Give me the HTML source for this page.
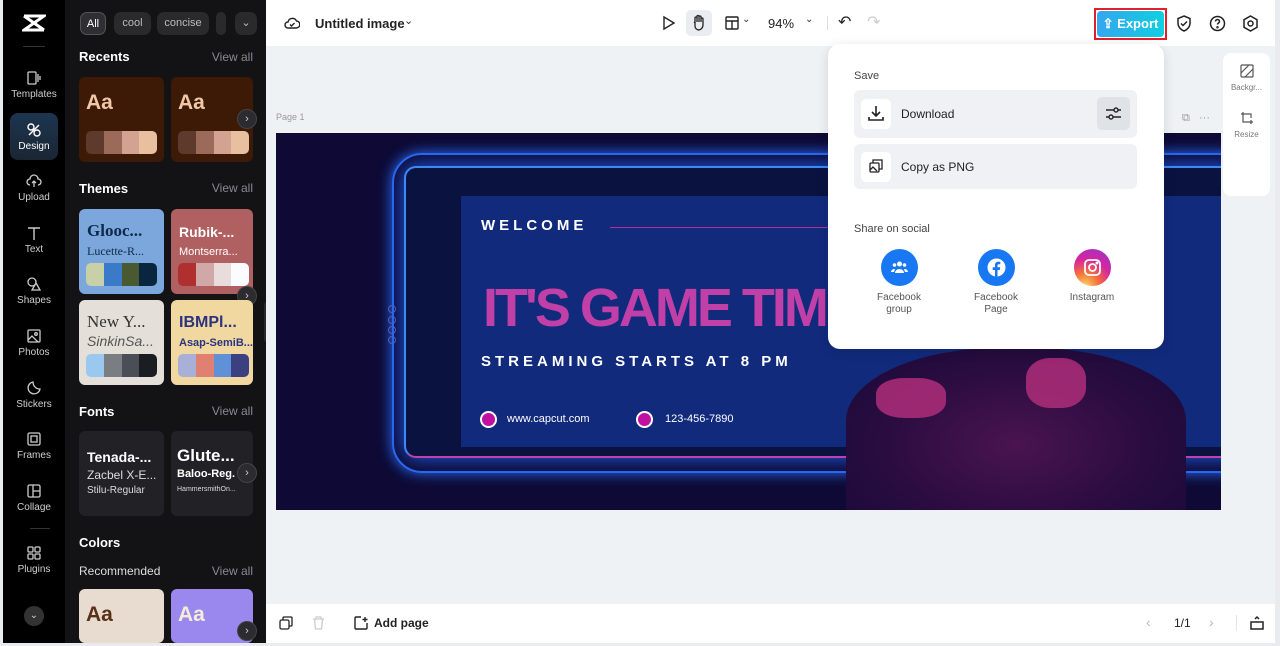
<!DOCTYPE html>
<html><head><meta charset="utf-8"><style>
*{box-sizing:border-box;margin:0;padding:0}
body{width:1280px;height:646px;overflow:hidden;background:#e9ebee;font-family:"Liberation Sans",sans-serif;position:relative}
.abs{position:absolute}
#rail{left:3px;top:0;width:62px;height:643px;background:#000}
#panel{left:65px;top:0;width:201px;height:643px;background:#131315}
.ri{position:absolute;left:0;width:62px;text-align:center;color:#cfcfd2;font-size:10px}
.ri svg{display:block;margin:0 auto 3px}
.chip{position:absolute;top:12px;height:23px;border-radius:7px;background:#2a2a2d;color:#bbb;font-size:11px;line-height:23px;text-align:center}
.h{position:absolute;left:14px;color:#fff;font-weight:bold;font-size:13px}
.va{position:absolute;right:13px;color:#8a8a8e;font-size:12px}
.card{position:absolute;width:85px;height:85px;border-radius:6px;overflow:hidden}
.sw{position:absolute;left:7px;bottom:8px;width:71px;height:23px;border-radius:5px;overflow:hidden;display:flex}
.sw i{flex:1}
.arr{position:absolute;width:20px;height:20px;border-radius:50%;background:#2c2c30;border:1px solid #444;color:#ccc;font-size:11px;line-height:18px;text-align:center}
#top{left:266px;top:0;width:1009px;height:46px;background:#fff}
#canvas{left:266px;top:46px;width:1009px;height:558px;background:#eef2f5}
#bot{left:266px;top:604px;width:1009px;height:39px;background:#fff}
#pop{left:828px;top:44px;width:336px;height:305px;background:#fff;border-radius:12px;box-shadow:0 2px 12px rgba(0,0,0,.12)}
.row{position:absolute;left:26px;width:283px;background:#eff1f4;border-radius:6px}
.ib{position:absolute;left:7px;width:30px;height:30px;background:#fff;border-radius:5px}
.soc{position:absolute;top:205px;width:80px;text-align:center;font-size:10px;color:#555;line-height:12px}
.soc .c{width:37px;height:37px;border-radius:50%;margin:0 auto 6px;background:#1877f2}
</style></head><body>

<div id="rail" class="abs">
 <svg class="abs" style="left:19px;top:14px" width="24" height="18" viewBox="0 0 24 18"><path d="M2 2h20L2 16h20M2 2l20 14" stroke="#fff" stroke-width="3" fill="none"/></svg>
 <div class="abs" style="left:20px;top:46px;width:22px;height:1px;background:#333"></div>
 <div class="ri" style="top:70px"><svg width="16" height="16" viewBox="0 0 16 16" fill="none" stroke="#ccc" stroke-width="1.3"><rect x="2" y="2" width="8" height="12" rx="1"/><path d="M12 4v8M14 6v4"/></svg>Templates</div>
 <div class="abs" style="left:7px;top:113px;width:48px;height:47px;border-radius:8px;background:linear-gradient(#1d3550,#1a2633)"></div>
 <div class="ri" style="top:122px;color:#fff"><svg width="16" height="16" viewBox="0 0 16 16" fill="none" stroke="#fff" stroke-width="1.4"><circle cx="5" cy="5" r="3"/><circle cx="11" cy="11" r="3"/><path d="M3 13L13 3"/></svg>Design</div>
 <div class="ri" style="top:173px"><svg width="16" height="16" viewBox="0 0 16 16" fill="none" stroke="#ccc" stroke-width="1.3"><path d="M4 12a3 3 0 010-6 4 4 0 018 0 3 3 0 010 6M8 8v6M6 10l2-2 2 2"/></svg>Upload</div>
 <div class="ri" style="top:225px"><svg width="16" height="16" viewBox="0 0 16 16" fill="none" stroke="#ccc" stroke-width="1.4"><path d="M2 3h12M8 3v12"/></svg>Text</div>
 <div class="ri" style="top:276px"><svg width="16" height="16" viewBox="0 0 16 16" fill="none" stroke="#ccc" stroke-width="1.3"><circle cx="6" cy="6" r="4"/><path d="M10 7l4 7H6z"/></svg>Shapes</div>
 <div class="ri" style="top:328px"><svg width="16" height="16" viewBox="0 0 16 16" fill="none" stroke="#ccc" stroke-width="1.3"><rect x="2" y="2" width="12" height="12" rx="1"/><path d="M2 12l4-4 6 6"/><circle cx="10" cy="6" r="1.3"/></svg>Photos</div>
 <div class="ri" style="top:380px"><svg width="16" height="16" viewBox="0 0 16 16" fill="none" stroke="#ccc" stroke-width="1.3"><path d="M14 9A6 6 0 117 2c0 3 2 7 7 7z"/></svg>Stickers</div>
 <div class="ri" style="top:431px"><svg width="16" height="16" viewBox="0 0 16 16" fill="none" stroke="#ccc" stroke-width="1.3"><rect x="2" y="2" width="12" height="12" rx="1.5"/><rect x="5" y="5" width="6" height="6"/></svg>Frames</div>
 <div class="ri" style="top:483px"><svg width="16" height="16" viewBox="0 0 16 16" fill="none" stroke="#ccc" stroke-width="1.3"><rect x="2" y="2" width="12" height="12" rx="1.5"/><path d="M7 2v12M7 8h7"/></svg>Collage</div>
 <div class="abs" style="left:27px;top:528px;width:20px;height:1px;background:#333"></div>
 <div class="ri" style="top:545px"><svg width="16" height="16" viewBox="0 0 16 16" fill="none" stroke="#ccc" stroke-width="1.3"><rect x="2" y="2" width="5" height="5" rx="1"/><rect x="9" y="2" width="5" height="5" rx="1"/><rect x="2" y="9" width="5" height="5" rx="1"/><rect x="9" y="9" width="5" height="5" rx="1"/></svg>Plugins</div>
 <div class="abs" style="left:21px;top:606px;width:20px;height:20px;border-radius:50%;background:#333;color:#ccc;font-size:10px;text-align:center;line-height:20px">⌄</div>
</div>

<div id="panel" class="abs">
 <div class="chip" style="left:15px;width:26px;background:#2f2f33;border:1px solid #555;color:#fff">All</div>
 <div class="chip" style="left:49px;width:37px">cool</div>
 <div class="chip" style="left:92px;width:52px">concise</div>
 <div class="chip" style="left:151px;width:10px"></div>
 <div class="chip" style="left:170px;width:22px">⌄</div>
 <div class="h" style="top:49px">Recents</div><div class="va" style="top:50px">View all</div>
 <div class="card" style="left:14px;top:77px;background:#3c1a06"><div class="abs" style="left:7px;top:14px;color:#f2c7a8;font-weight:bold;font-size:21px">Aa</div><div class="sw"><i style="background:#5e3a2c"></i><i style="background:#9c6a58"></i><i style="background:#d4a290"></i><i style="background:#e8c0a0"></i></div></div>
 <div class="card" style="left:106px;top:77px;width:82px;background:#3c1a06"><div class="abs" style="left:7px;top:14px;color:#f2c7a8;font-weight:bold;font-size:21px">Aa</div><div class="sw"><i style="background:#5e3a2c"></i><i style="background:#9c6a58"></i><i style="background:#d4a290"></i><i style="background:#e8c0a0"></i></div></div>
 <div class="arr" style="left:172px;top:109px">›</div>
 <div class="h" style="top:181px">Themes</div><div class="va" style="top:181px">View all</div>
 <div class="card" style="left:14px;top:209px;background:#7ba7dd"><div class="abs" style="left:8px;top:12px;color:#0d2a4a;font-family:'Liberation Serif',serif;font-weight:bold;font-size:17px">Glooc...</div><div class="abs" style="left:8px;top:35px;color:#0d2a4a;font-family:'Liberation Serif',serif;font-size:12px">Lucette-R...</div><div class="sw"><i style="background:#c8d0a8"></i><i style="background:#3a7ac8"></i><i style="background:#495a30"></i><i style="background:#0a2540"></i></div></div>
 <div class="card" style="left:106px;top:209px;width:82px;background:#b06060"><div class="abs" style="left:8px;top:15px;color:#fff;font-weight:bold;font-size:14px">Rubik-...</div><div class="abs" style="left:8px;top:37px;color:#fff;font-size:11px">Montserra...</div><div class="sw"><i style="background:#b03030"></i><i style="background:#d0a8a8"></i><i style="background:#e8dcdc"></i><i style="background:#fafcfd"></i></div></div>
 <div class="arr" style="left:172px;top:286px">›</div>
 <div class="card" style="left:14px;top:300px;background:#e4dfd8"><div class="abs" style="left:8px;top:12px;color:#333;font-family:'Liberation Serif',serif;font-size:17px">New Y...</div><div class="abs" style="left:8px;top:33px;color:#555;font-style:italic;font-size:14px">SinkinSa...</div><div class="sw"><i style="background:#9ac8ee"></i><i style="background:#7a7e82"></i><i style="background:#4a4e56"></i><i style="background:#1a1e22"></i></div></div>
 <div class="card" style="left:106px;top:300px;width:82px;background:#f0d8a0"><div class="abs" style="left:8px;top:14px;color:#2a3480;font-weight:bold;font-size:16px">IBMPl...</div><div class="abs" style="left:8px;top:37px;color:#2a3480;font-weight:bold;font-size:11px">Asap-SemiB...</div><div class="sw"><i style="background:#a8b0d8"></i><i style="background:#e08070"></i><i style="background:#6090d8"></i><i style="background:#3a4080"></i></div></div>
 <div class="h" style="top:404px">Fonts</div><div class="va" style="top:404px">View all</div>
 <div class="card" style="left:14px;top:431px;background:#222226"><div class="abs" style="left:8px;top:18px;color:#fff;font-weight:bold;font-size:14px">Tenada-...</div><div class="abs" style="left:8px;top:37px;color:#ddd;font-size:12px">Zacbel X-E...</div><div class="abs" style="left:8px;top:54px;color:#ddd;font-size:10px">Stilu-Regular</div></div>
 <div class="card" style="left:106px;top:431px;width:82px;background:#222226"><div class="abs" style="left:6px;top:15px;color:#fff;font-weight:bold;font-size:17px">Glute...</div><div class="abs" style="left:6px;top:37px;color:#fff;font-weight:bold;font-size:11px">Baloo-Reg.</div><div class="abs" style="left:6px;top:55px;color:#ddd;font-size:7px">HammersmithOn...</div></div>
 <div class="arr" style="left:172px;top:463px">›</div>
 <div class="h" style="top:535px">Colors</div>
 <div class="abs" style="left:14px;top:564px;color:#ddd;font-size:12px">Recommended</div><div class="va" style="top:564px">View all</div>
 <div class="card" style="left:14px;top:589px;height:54px;background:#e8dcd0"><div class="abs" style="left:7px;top:14px;color:#5a3018;font-weight:bold;font-size:21px">Aa</div></div>
 <div class="card" style="left:106px;top:589px;width:82px;height:54px;background:#9a88ee"><div class="abs" style="left:7px;top:14px;color:#f4ecd8;font-weight:bold;font-size:21px">Aa</div></div>
 <div class="arr" style="left:172px;top:621px">›</div>
</div>
<div class="abs" style="left:264px;top:302px;width:7px;height:40px;background:#2a2a2d;border-radius:3px"></div>

<div id="top" class="abs">
 <svg class="abs" style="left:18px;top:16px" width="16" height="14" viewBox="0 0 16 14" fill="none" stroke="#222" stroke-width="1.4"><path d="M4 12a3 3 0 010-6 4.5 4.5 0 018.5-1A3.5 3.5 0 0112 12z"/><path d="M6 8.5l1.5 1.5 3-3"/></svg>
 <div class="abs" style="left:49px;top:16px;font-size:13px;color:#222;font-weight:bold">Untitled image</div>
 <div class="abs" style="left:138px;top:14px;font-size:11px;color:#333">⌄</div>
 <svg class="abs" style="left:396px;top:15px" width="14" height="16" viewBox="0 0 14 16" fill="none" stroke="#222" stroke-width="1.4"><path d="M2 2l10 6-10 6z"/></svg>
 <div class="abs" style="left:420px;top:10px;width:26px;height:26px;background:#e9ecf0;border-radius:5px"></div>
 <svg class="abs" style="left:425px;top:14px" width="16" height="18" viewBox="0 0 16 18" fill="none" stroke="#222" stroke-width="1.3"><path d="M4 9V4a1 1 0 012 0v4V2.5a1 1 0 012 0V8V3a1 1 0 012 0v5-3a1 1 0 012 0v6a5 5 0 01-5 5H8a4 4 0 01-4-4V9L3 8"/></svg>
 <svg class="abs" style="left:459px;top:16px" width="14" height="14" viewBox="0 0 14 14" fill="none" stroke="#222" stroke-width="1.4"><rect x="1" y="1" width="12" height="12" rx="1"/><path d="M1 5h12M7 5v8"/></svg>
 <div class="abs" style="left:476px;top:14px;font-size:10px;color:#333">⌄</div>
 <div class="abs" style="left:502px;top:16px;font-size:13px;color:#222">94%</div>
 <div class="abs" style="left:539px;top:14px;font-size:10px;color:#333">⌄</div>
 <div class="abs" style="left:561px;top:16px;width:1px;height:14px;background:#ddd"></div>
 <div class="abs" style="left:572px;top:12px;font-size:16px;color:#222">↶</div>
 <div class="abs" style="left:601px;top:12px;font-size:16px;color:#ccc">↷</div>
 <div class="abs" style="left:828px;top:8px;width:73px;height:32px;border:2px solid #e0202a"></div>
 <div class="abs" style="left:831px;top:11px;width:67px;height:26px;border-radius:4px;background:linear-gradient(90deg,#36a6f0,#10cfe0);color:#fff;font-size:13px;font-weight:bold;line-height:26px;text-align:center">⇪ Export</div>
 <svg class="abs" style="left:910px;top:15px" width="16" height="17" viewBox="0 0 16 17" fill="none" stroke="#222" stroke-width="1.5"><path d="M8 1l6 2.5V8c0 4-3 7-6 8-3-1-6-4-6-8V3.5z"/><path d="M5 8.5l2 2 4-4"/></svg>
 <svg class="abs" style="left:943px;top:15px" width="17" height="17" viewBox="0 0 17 17" fill="none" stroke="#222" stroke-width="1.5"><circle cx="8.5" cy="8.5" r="7"/><path d="M6.5 6.5a2 2 0 114 0c0 1.5-2 1.5-2 3"/><circle cx="8.5" cy="12.3" r=".5"/></svg>
 <svg class="abs" style="left:976px;top:15px" width="17" height="17" viewBox="0 0 17 17" fill="none" stroke="#222" stroke-width="1.5"><path d="M8.5 1l6.5 3.7v7.6L8.5 16 2 12.3V4.7z"/><circle cx="8.5" cy="8.5" r="2.5"/></svg>
</div>

<div id="canvas" class="abs">
 <div class="abs" style="left:10px;top:66px;font-size:9px;color:#999">Page 1</div>
 <div class="abs" style="left:916px;top:66px;font-size:11px;color:#999">⧉ &nbsp; ···</div>
 <div class="abs" style="left:957px;top:7px;width:47px;height:143px;background:#fff;border-radius:8px"></div>
 <svg class="abs" style="left:974px;top:18px" width="14" height="14" viewBox="0 0 14 14" fill="none" stroke="#555" stroke-width="1.2"><rect x="1" y="1" width="12" height="12" rx="1"/><path d="M1 9l8-8M5 13l8-8"/></svg>
 <div class="abs" style="left:960px;top:37px;width:41px;text-align:center;font-size:8px;color:#777">Backgr...</div>
 <svg class="abs" style="left:974px;top:65px" width="14" height="14" viewBox="0 0 14 14" fill="none" stroke="#555" stroke-width="1.2"><path d="M3 1v10h10M1 3h10v4M11 9v4"/></svg>
 <div class="abs" style="left:960px;top:84px;width:41px;text-align:center;font-size:8px;color:#777">Resize</div>

 <div class="abs" style="left:10px;top:87px;width:945px;height:377px;background:#0e0a35;overflow:hidden">
  <div class="abs" style="left:116px;top:20px;width:860px;height:320px;border:2px solid #2a6af0;border-radius:30px 0 0 30px;box-shadow:0 0 14px #2a6af0"></div>
  <div class="abs" style="left:128px;top:33px;width:840px;height:292px;border:2px solid #3a8af8;border-bottom-color:#c040b0;border-radius:12px 0 0 12px;background:#0a1240;box-shadow:0 0 20px #2060f0"></div>
  <div class="abs" style="left:112px;top:172px;width:8px;height:8px;border:1px solid #5060c0;border-radius:50%"></div>
  <div class="abs" style="left:112px;top:183px;width:8px;height:8px;border:1px solid #5060c0;border-radius:50%"></div>
  <div class="abs" style="left:112px;top:193px;width:8px;height:8px;border:1px solid #5060c0;border-radius:50%"></div>
  <div class="abs" style="left:112px;top:203px;width:8px;height:8px;border:1px solid #5060c0;border-radius:50%"></div>
  <div class="abs" style="left:185px;top:63px;width:760px;height:251px;background:#112a7c"></div>
  <div class="abs" style="left:570px;top:215px;width:340px;height:162px;border-radius:45% 45% 0 0;background:radial-gradient(ellipse at 50% 60%,#4a1450 0%,#2a0c40 55%,#180a38 100%)"></div>
  <div class="abs" style="left:600px;top:245px;width:70px;height:40px;border-radius:40%;background:#b8307e;opacity:.8"></div>
  <div class="abs" style="left:750px;top:225px;width:60px;height:50px;border-radius:40%;background:#b8307e;opacity:.8"></div>
  <div class="abs" style="left:205px;top:84px;color:#fff;font-size:15px;letter-spacing:4px;font-weight:bold">WELCOME</div>
  <div class="abs" style="left:334px;top:94px;width:400px;height:1px;background:#b0309a"></div>
  <div class="abs" style="left:207px;top:144px;color:#c040a8;font-size:54px;font-weight:bold;letter-spacing:-3px;white-space:nowrap">IT'S GAME TIME</div>
  <div class="abs" style="left:205px;top:220px;color:#fff;font-size:15px;letter-spacing:4px;font-weight:bold">STREAMING STARTS AT 8 PM</div>
  <div class="abs" style="left:204px;top:278px;width:17px;height:17px;border-radius:50%;background:#c010a0;border:2px solid #fff"></div>
  <div class="abs" style="left:231px;top:280px;color:#fff;font-size:11px">www.capcut.com</div>
  <div class="abs" style="left:360px;top:278px;width:17px;height:17px;border-radius:50%;background:#c010a0;border:2px solid #fff"></div>
  <div class="abs" style="left:389px;top:280px;color:#fff;font-size:11px">123-456-7890</div>
 </div>
</div>

<div id="pop" class="abs">
 <div class="abs" style="left:26px;top:26px;font-size:11px;color:#444">Save</div>
 <div class="row" style="top:46px;height:48px"><div class="ib" style="top:9px"></div>
  <svg class="abs" style="left:14px;top:15px" width="16" height="17" viewBox="0 0 16 17" fill="none" stroke="#222" stroke-width="1.6"><path d="M8 1v10M4 7l4 4 4-4M1 12v3h14v-3"/></svg>
  <div class="abs" style="left:47px;top:17px;font-size:12px;color:#222">Download</div>
  <div class="abs" style="left:243px;top:7px;width:33px;height:33px;background:#dfe3e8;border-radius:5px"></div>
  <svg class="abs" style="left:251px;top:16px" width="17" height="15" viewBox="0 0 17 15" fill="none" stroke="#222" stroke-width="1.4"><path d="M1 4h15M1 11h15"/><circle cx="11" cy="4" r="2" fill="#dfe3e8"/><circle cx="6" cy="11" r="2" fill="#dfe3e8"/></svg>
 </div>
 <div class="row" style="top:100px;height:45px"><div class="ib" style="top:8px"></div>
  <svg class="abs" style="left:15px;top:15px" width="14" height="14" viewBox="0 0 14 14" fill="none" stroke="#222" stroke-width="1.3"><rect x="1" y="4" width="9" height="9" rx="1"/><path d="M4 4V1h9v9h-3M1 11l3-3 4 4"/></svg>
  <div class="abs" style="left:47px;top:16px;font-size:12px;color:#222">Copy as PNG</div>
 </div>
 <div class="abs" style="left:26px;top:179px;font-size:11px;color:#444">Share on social</div>
 <div class="soc" style="left:31px"><div class="c" style="position:relative"><svg class="abs" style="left:10px;top:11px" width="17" height="14" viewBox="0 0 17 14" fill="#fff"><circle cx="8.5" cy="4" r="2.5"/><circle cx="3.5" cy="5" r="1.8"/><circle cx="13.5" cy="5" r="1.8"/><path d="M4 13a4.5 4 0 019 0zM0 12a3.5 3 0 014-3l-1 3zM17 12a3.5 3 0 00-4-3l1 3z"/></svg></div>Facebook<br>group</div>
 <div class="soc" style="left:128px"><div class="c" style="position:relative"><svg class="abs" style="left:9px;top:9px" width="19" height="19" viewBox="0 0 19 19"><circle cx="9.5" cy="9.5" r="9" fill="#fff"/><path d="M10.5 19v-7h2.3l.4-2.7h-2.7V7.6c0-.8.3-1.3 1.4-1.3h1.4V3.9c-.3 0-1.1-.1-2-.1-2 0-3.3 1.2-3.3 3.4v2.1H5.7V12H8v7z" fill="#1877f2"/></svg></div>Facebook<br>Page</div>
 <div class="soc" style="left:224px"><div class="c" style="position:relative;background:radial-gradient(circle at 30% 100%,#fdd36a 0%,#f5703a 30%,#d6249f 60%,#8a3ad0 100%)"><svg class="abs" style="left:9px;top:9px" width="19" height="19" viewBox="0 0 19 19" fill="none" stroke="#fff" stroke-width="1.8"><rect x="2" y="2" width="15" height="15" rx="4"/><circle cx="9.5" cy="9.5" r="3.5"/><circle cx="14" cy="5" r=".6" fill="#fff"/></svg></div>Instagram</div>
</div>

<div id="bot" class="abs">
 <svg class="abs" style="left:13px;top:12px" width="14" height="14" viewBox="0 0 14 14" fill="none" stroke="#222" stroke-width="1.3"><rect x="1" y="4" width="9" height="9" rx="1.5"/><path d="M4 4V2a1 1 0 011-1h7a1 1 0 011 1v7a1 1 0 01-1 1h-2"/></svg>
 <svg class="abs" style="left:46px;top:12px" width="13" height="14" viewBox="0 0 13 14" fill="none" stroke="#ccc" stroke-width="1.3"><path d="M1 3h11M4 3V1h5v2M2.5 3l1 10h6l1-10"/></svg>
 <svg class="abs" style="left:88px;top:12px" width="14" height="14" viewBox="0 0 14 14" fill="none" stroke="#222" stroke-width="1.4"><path d="M7 1H2a1 1 0 00-1 1v10a1 1 0 001 1h10a1 1 0 001-1V7M11 1v5M8.5 3.5h5"/></svg>
 <div class="abs" style="left:108px;top:12px;font-size:12px;color:#222;font-weight:bold">Add page</div>
 <div class="abs" style="left:880px;top:10px;font-size:14px;color:#bbb">‹</div>
 <div class="abs" style="left:908px;top:12px;font-size:12px;color:#222">1/1</div>
 <div class="abs" style="left:943px;top:10px;font-size:14px;color:#bbb">›</div>
 <div class="abs" style="left:970px;top:11px;width:1px;height:16px;background:#e5e5e5"></div>
 <svg class="abs" style="left:984px;top:11px" width="14" height="16" viewBox="0 0 14 16" fill="none" stroke="#222" stroke-width="1.5"><rect x="1" y="7" width="12" height="7"/><path d="M5 4l2-2 2 2"/></svg>
</div>
</body></html>
